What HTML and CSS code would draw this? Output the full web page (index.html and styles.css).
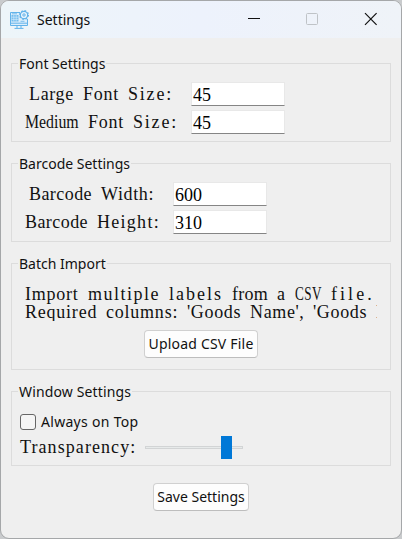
FILE: index.html
```
<!DOCTYPE html>
<html lang="en">
<head>
<meta charset="utf-8">
<title>Settings</title>
<link rel="stylesheet" href="styles.css">
</head>
<body>
<div class="desktop">
<main class="window">
  <header class="titlebar">
    <svg class="app-icon" width="20" height="20" viewBox="0 0 20 20" fill="none" stroke="#62b3ea">
      <path d="M11 2.5H1.5v13h17V9" fill="#dceefb"/>
      <path d="M1.5 13.2h17M8 15.5v2.5M12 15.5v2.5M5.5 18.4h9"/>
      <rect x="2.5" y="5" width="7" height="6.5" fill="#74bdee" stroke="none"/>
      <path d="M2.5 7.2h7M2.5 9.4h7M4.8 5v6.5M7.2 5v6.5" stroke="#dceefb" stroke-width=".6"/>
      <path d="M11.5 11.3h4M3 3.8h5" stroke-width=".8"/>
      <circle cx="15" cy="5" r="3.7" fill="#e6f3fc" stroke-width="1.2"/>
      <circle cx="15" cy="5" r="4.4" stroke-dasharray="1.7 1.75" stroke-width="1.2"/>
      <circle cx="15" cy="5" r="1.2"/>
    </svg>
    <h1 class="title">Settings</h1>
    <svg class="controls" width="132" height="14" viewBox="0 0 132 14" fill="none">
      <path d="M1 6.500h12" stroke="#111"/>
      <rect x="59.5" y="1.5" width="11" height="11" rx="1" stroke="#bfc3c7"/>
      <path d="M118 1.200l11.600 11.600M129.600 1.200L118 12.800" stroke="#111" stroke-width="1.2"/>
    </svg>
  </header>

  <section class="group font-group">
    <h2 class="legend">Font Settings</h2>
    <div class="field"><div class="label wide indent"><span class="w5 s3">Large</span><span class="w4 s4">Font</span><span class="w5 s10">Size:</span></div><div class="entry">45</div></div>
    <div class="field"><div class="label wide"><span class="w6 squeeze-medium">Medium</span><span class="w4 s4">Font</span><span class="w5 s10">Size:</span></div><div class="entry">45</div></div>
  </section>

  <section class="group barcode-group">
    <h2 class="legend">Barcode Settings</h2>
    <div class="field"><div class="label narrow indent"><span class="w7 s2">Barcode</span><span class="w6 s3">Width:</span></div><div class="entry">600</div></div>
    <div class="field"><div class="label narrow"><span class="w7 s2">Barcode</span><span class="w7 s7">Height:</span></div><div class="entry">310</div></div>
  </section>

  <section class="group import-group">
    <h2 class="legend">Batch Import</h2>
    <div class="note">
      <p class="label"><span class="w6 s4">Import</span><span class="w8 s8">multiple</span><span class="w6 s11">labels</span><span class="w4 s1">from</span><span class="w1 s4">a</span><span class="w3 squeeze-csv">CSV</span><span class="w5 s18">file.</span></p>
      <p class="label"><span class="w8 s4">Required</span><span class="w8 s4">columns:</span><span class="w6 s3">'Goods</span><span class="w6 s3">Name',</span><span class="w6 s3">'Goods</span><span class="w1">N</span></p>
    </div>
    <button class="button upload">Upload CSV File</button>
  </section>

  <section class="group window-group">
    <h2 class="legend loose">Window Settings</h2>
    <div class="check"><span class="box"></span><span class="check-text">Always on Top</span></div>
    <div class="range"><div class="label range-label"><span class="w13 s6">Transparency:</span></div><div class="track"><span class="thumb"></span></div></div>
  </section>

  <button class="button save">Save Settings</button>
</main>
</div>
</body>
</html>
```
FILE: styles.css
```
* { box-sizing: border-box; }
body { margin: 0; font-family: "Noto Sans", sans-serif; color: #111; font-size: 14px; }
h1, h2, p { margin: 0; font-weight: 400; }
.desktop { width: 402px; height: 539px; background: #c9cbcd; overflow: hidden; }
.window {
  width: 402px; height: 539px; display: flex; flex-direction: column;
  background: #efefef; border: 1px solid #a5a7a9; border-radius: 9px; overflow: hidden;
}
.titlebar {
  height: 37px; flex: none; display: flex; align-items: center; padding-left: 8px;
  background: linear-gradient(90deg, #edf5f9, #edf2fc 50%, #eff3f8);
}
.app-icon { flex: none; }
.title { font-size: 14px; line-height: 20px; margin-left: 8px; }
.controls { margin: 0 22px 1px auto; }
.group { flex: none; margin: 0 10px; width: 380px; border: 1px solid #dcdcdc; }
.font-group { margin-top: 25px; height: 79px; }
.barcode-group { margin-top: 21px; height: 79px; }
.import-group { margin-top: 21px; height: 107px; }
.window-group { margin-top: 21px; height: 75px; }
.legend {
  width: max-content; height: 18px; line-height: 18px; margin: -9px 0 0 6px;
  padding: 0 1px; background: #efefef; font-size: 14px; white-space: nowrap;
}
.loose { letter-spacing: .14px; }

/* Serif words set on a 9px character grid */
.label {
  display: flex; flex: none; gap: 9px; height: 18px;
  font: 18px/18px "Liberation Serif", serif; white-space: nowrap;
}
.label span { flex: none; }
.w1 { width: 9px; } .w3 { width: 27px; } .w4 { width: 36px; } .w5 { width: 45px; }
.w6 { width: 54px; } .w7 { width: 63px; } .w8 { width: 72px; } .w13 { width: 117px; }
.s1 { letter-spacing: .014em; } .s2 { letter-spacing: .024em; }
.s3 { letter-spacing: .035em; } .s4 { letter-spacing: .043em; }
.s6 { letter-spacing: .06em; } .s7 { letter-spacing: .071em; }
.s8 { letter-spacing: .083em; } .s10 { letter-spacing: .1em; }
.s11 { letter-spacing: .111em; } .s18 { letter-spacing: .17em; }
.label .squeeze-medium { width: 62px; margin-right: -8px; transform: scaleX(.88); transform-origin: 0 0; }
.label .squeeze-csv { width: 37px; margin-right: -10px; letter-spacing: .04em; transform: scaleX(.73); transform-origin: 0 0; }

.field { display: flex; height: 24px; margin: 9px 0 0 13px; align-items: center; }
.field + .field { margin-top: 4px; }
.wide { width: 166px; }
.narrow { width: 148px; }
.indent { padding-left: 4px; }
.entry {
  width: 94px; height: 24px; padding: 3px 0 0 1px; overflow: hidden;
  font: 18px/18px "Liberation Serif", serif; color: #000;
  background: #fff; border: 1px solid #e8e8e8; border-bottom-color: #858585;
}
.note { width: 352px; height: 36px; margin: 12px 0 0 13px; overflow: hidden; }
.button {
  display: block; height: 28px; padding: 0; font: 14px/24px "Noto Sans", sans-serif;
  color: #111; background: #fdfdfd; border: 1px solid #d0d0d0; border-bottom-color: #bdbdbd;
  border-radius: 4px; white-space: nowrap;
}
.upload { width: 114px; margin: 9px 0 0 132px; letter-spacing: .2px; }
.save { width: 96px; margin: 17px 0 0 152px; flex: none; }
.check { display: flex; align-items: center; height: 18px; margin: 12px 0 0 8px; }
.box { width: 16px; height: 16px; border: 1px solid #666; border-radius: 3px; background: #f5f5f5; }
.check-text { margin-left: 5px; line-height: 18px; letter-spacing: .3px; }
.range { display: flex; align-items: center; height: 24px; margin: 4px 0 0 8px; }
.range-label { width: 125px; }
.track { width: 98px; height: 3px; background: #e7eaea; border: 1px solid #d2d4d5; display: flex; align-items: center; }
.thumb { flex: none; width: 11px; height: 23px; margin-left: 75px; background: #0078d7; }
```
